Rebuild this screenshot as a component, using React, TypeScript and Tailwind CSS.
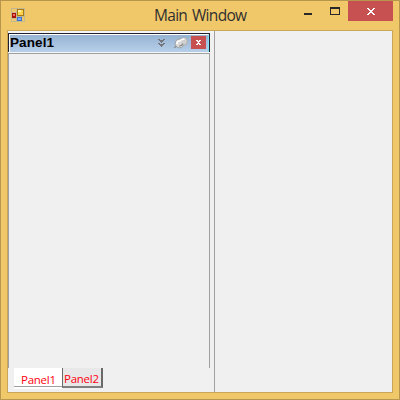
const uiFont = "font-['Open_Sans','Noto_Sans',sans-serif]";

function AppIcon() {
  return (
    <svg width="14" height="14" viewBox="0 0 14 14" shapeRendering="crispEdges">
      <path d="M0.5 0.5h13v13h-13zM5.5 0v14M0 4.5h5M0 10.5h5M5 8.5h9" fill="none" stroke="#c3b890" />
      <rect x="6" y="1" width="7" height="7" fill="#a87812" />
      <rect x="7" y="2" width="5" height="5" fill="#fbd34e" />
      <rect x="7" y="2" width="3" height="2" fill="#fff0a8" />
      <rect x="1" y="5" width="4" height="5" fill="#a80f0f" />
      <rect x="2" y="6" width="2" height="2" fill="#ee6e60" />
      <rect x="6" y="9" width="5" height="4" fill="#3c70d0" />
      <rect x="7" y="10" width="3" height="2" fill="#78b0fa" />
    </svg>
  );
}

function Pin() {
  return (
    <svg width="14" height="12" viewBox="0 0 14 12">
      <path d="M0 10.6L4 8.4" stroke="#8b8b8b" strokeWidth="1.2" />
      <ellipse cx="5.6" cy="6.4" rx="4.4" ry="4.4" fill="#dcdcdc" stroke="#8d8d8d" strokeWidth="0.7" />
      <ellipse cx="9.6" cy="4.3" rx="3.9" ry="3.9" fill="#cfcfcf" stroke="#a0a0a0" strokeWidth="0.6" />
      <path d="M4 4.5Q6.5 3 8 4.5L7 8Q4 8 4 4.5" fill="#d8d8d8" />
      <path d="M2.6 7Q3 4 5.5 4Q8 2 10.5 2" fill="none" stroke="#ffffff" strokeWidth="1.5" />
      <path d="M5 9Q8.4 9 8.8 6.5" fill="none" stroke="#858585" strokeWidth="1.1" />
    </svg>
  );
}

function TitleBar() {
  return (
    <header className="flex h-[29px] items-start">
      <div className="ml-[10px] mt-[7px] w-[143px]"><AppIcon /></div>
      <h1 className={`${uiFont} mt-[4px] w-[142px] whitespace-nowrap text-[15.5px] leading-5 tracking-[-0.7px] [word-spacing:1.5px] text-[#303030]`}>
        Main Window
      </h1>
      <button className="ml-[8px] mt-[12px] h-[2px] w-[8px] bg-[#282828]" aria-label="Minimize" />
      <button className="ml-[18px] mt-[6px] h-[8px] w-[10px] border border-t-2 border-[#282828]" aria-label="Maximize" />
      <button className="ml-[8px] flex h-[20px] w-[45px] items-center justify-center bg-[#c75050]" aria-label="Close">
        <svg width="8" height="7" viewBox="0 0 8 7" shapeRendering="crispEdges" fill="#fff">
          <path d="M0 0h2v1h1v1h2v-1h1v-1h2v1h-1v1h-1v1h-1v1h1v1h1v1h1v1h-2v-1h-1v-1h-2v1h-1v1h-2v-1h1v-1h1v-1h1v-1h-1v-1h-1v-1h-1z" />
        </svg>
      </button>
    </header>
  );
}

function PanelHeader() {
  return (
    <div className="flex h-[19px] w-[202px] border-x border-t border-[#20222e]">
      <div className="flex w-full border-l border-r border-t border-l-white border-r-[#80dff4] border-t-white bg-linear-to-b from-[#96b3d3] to-[#b7cfe9]">
        <span className="w-[148px] font-['Liberation_Sans',sans-serif] text-[13.5px] font-bold leading-[15px] tracking-[0.1px] text-black">Panel1</span>
        <svg className="mt-[4px]" width="7" height="8" viewBox="0 0 7 8" shapeRendering="crispEdges" fill="#74777e">
          <path d="M0 0h2v1h3v-1h2v1h-1v1h-1v1h-1v1h-1v-1h-1v-1h-1v-1h-1z" />
          <path d="M0 4h2v1h3v-1h2v1h-1v1h-1v1h-1v1h-1v-1h-1v-1h-1v-1h-1z" />
        </svg>
        <span className="ml-[9px] mt-[2px]"><Pin /></span>
        <button className="ml-[3px] mt-[1px] flex h-[13px] w-[15px] items-center justify-center bg-[#c75050]" aria-label="Close panel">
          <svg width="5" height="5" viewBox="0 0 5 5" shapeRendering="crispEdges" fill="#fff">
            <path d="M0 0h2v1h1v-1h2v1h-1v1h-1v1h1v1h1v1h-2v-1h-1v1h-2v-1h1v-1h1v-1h-1v-1h-1z" />
          </svg>
        </button>
      </div>
    </div>
  );
}

export default function App() {
  return (
    <div className="flex h-[400px] w-[400px] flex-col border border-[#b7964d] bg-[#f0c869]">
      <TitleBar />
      <main className="ml-[6px] flex h-[363px] w-[386px] border border-[#c9a658] bg-[#f0f0f0]">
        <section className="flex w-[207px] shrink-0 flex-col border-r border-[#a0a0a0]">
          <div className="h-[2px] bg-[#f5f5f5]" />
          <PanelHeader />
          <div className="h-px w-[202px] bg-[#f6f6f6]" />
          <div className="h-[315px] w-[202px] border border-b-0 border-[#a0a0a0]" />
          <div className={`${uiFont} ml-[6px] flex h-[21px] text-[11.5px] tracking-[-0.25px] text-[#ff0010]`}>
            <div className="flex h-[21px] w-[48px] flex-col bg-white">
              <span className="ml-[7px] h-[18px] whitespace-nowrap leading-[23px]">Panel1</span>
              <span className="h-px bg-[#a0a0a0]" />
            </div>
            <div className="h-[20px] w-[41px] border-b-2 border-l border-r-2 border-[#696969] border-b-[#808080] bg-[#e8e8e8]">
              <span className="ml-px block whitespace-nowrap leading-[21px]">Panel2</span>
            </div>
          </div>
        </section>
      </main>
    </div>
  );
}
